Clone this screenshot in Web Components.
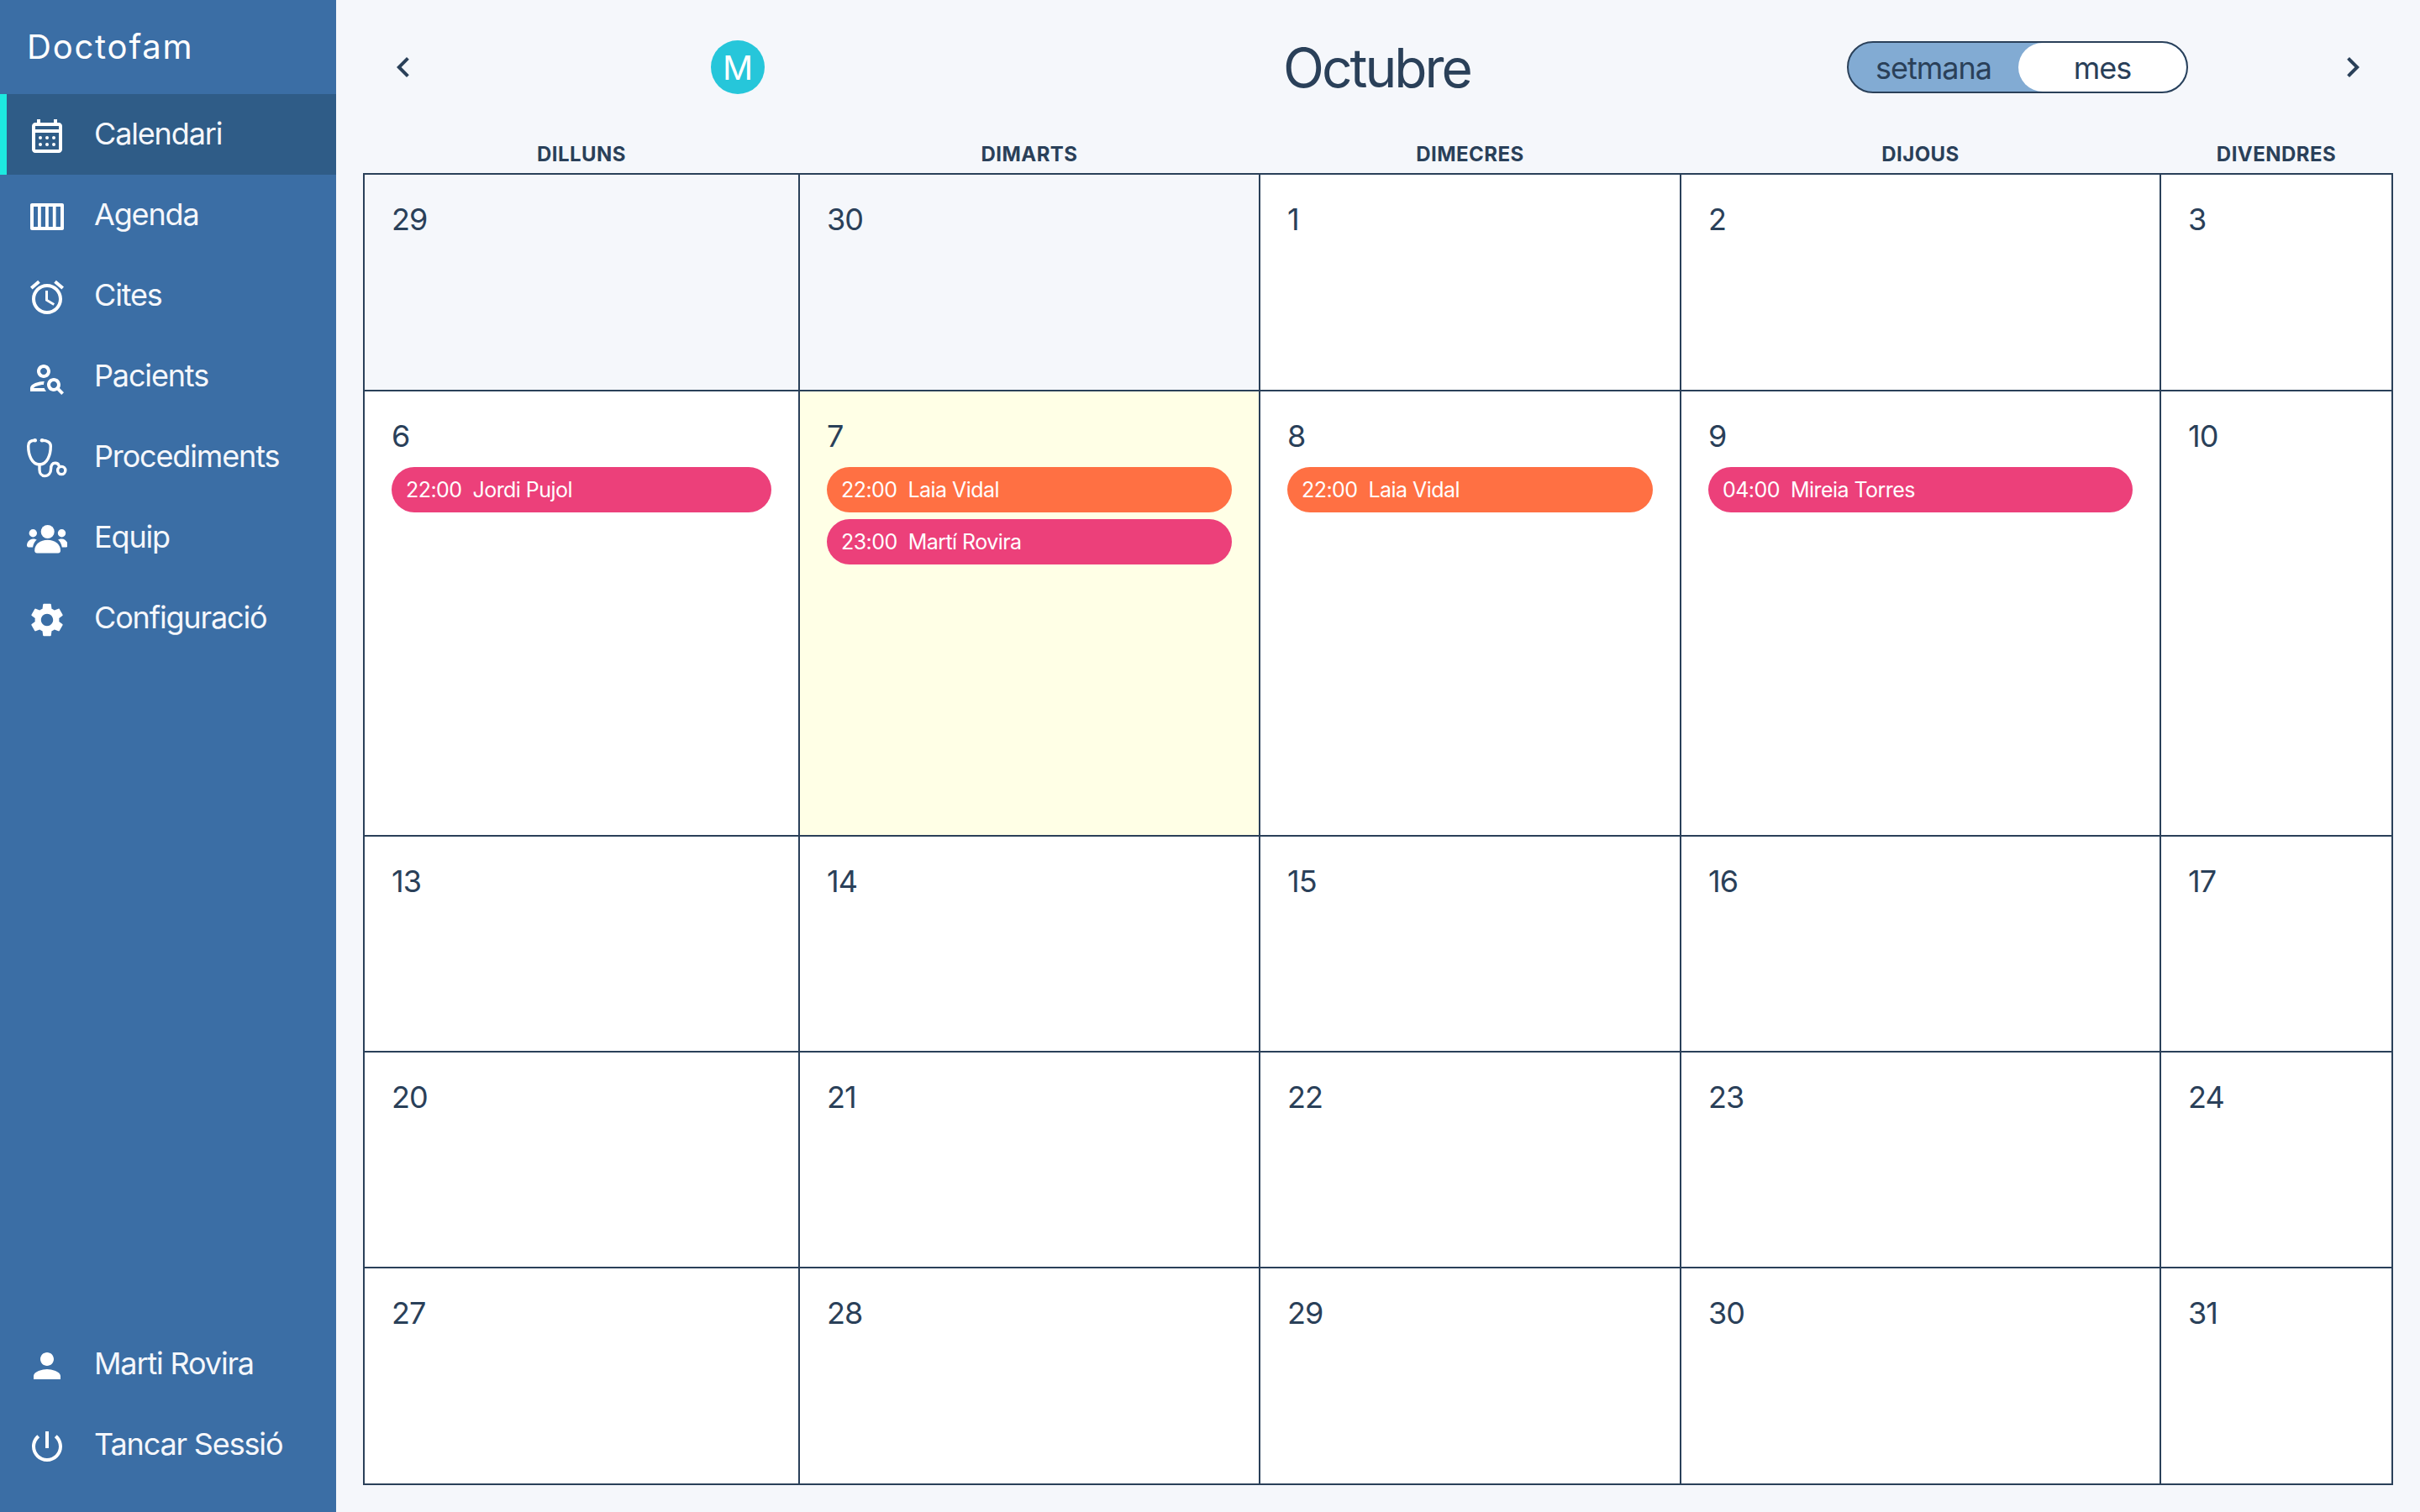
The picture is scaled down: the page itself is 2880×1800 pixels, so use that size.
<!DOCTYPE html>
<html lang="ca">
<head>
<meta charset="utf-8">
<title>Doctofam</title>
<style>
  html, body { margin: 0; height: 100%; }
  body {
    background: #f5f7fb;
    color: #2a4059;
    font-family: Inter, "Liberation Sans", sans-serif;
  }
</style>
</head>
<body>
<app-shell>
  <side-bar slot="side">
    <nav-item icon="calendar" active>Calendari</nav-item>
    <nav-item icon="agenda">Agenda</nav-item>
    <nav-item icon="alarm">Cites</nav-item>
    <nav-item icon="search">Pacients</nav-item>
    <nav-item icon="stetho">Procediments</nav-item>
    <nav-item icon="group">Equip</nav-item>
    <nav-item icon="gear">Configuració</nav-item>
    <nav-item slot="bottom" icon="person">Marti Rovira</nav-item>
    <nav-item slot="bottom" icon="power">Tancar Sessió</nav-item>
  </side-bar>

  <cal-header title="Octubre" avatar="M"></cal-header>

  <cal-weekdays>
    <span>DILLUNS</span><span>DIMARTS</span><span>DIMECRES</span><span>DIJOUS</span><span>DIVENDRES</span>
  </cal-weekdays>

  <cal-grid>
    <cal-day num="29" muted></cal-day>
    <cal-day num="30" muted></cal-day>
    <cal-day num="1"></cal-day>
    <cal-day num="2"></cal-day>
    <cal-day num="3"></cal-day>

    <cal-day num="6"><cal-event time="22:00" tone="pink">Jordi Pujol</cal-event></cal-day>
    <cal-day num="7" today>
      <cal-event time="22:00" tone="orange">Laia Vidal</cal-event>
      <cal-event time="23:00" tone="pink">Martí Rovira</cal-event>
    </cal-day>
    <cal-day num="8"><cal-event time="22:00" tone="orange">Laia Vidal</cal-event></cal-day>
    <cal-day num="9"><cal-event time="04:00" tone="pink">Mireia Torres</cal-event></cal-day>
    <cal-day num="10"></cal-day>

    <cal-day num="13"></cal-day>
    <cal-day num="14"></cal-day>
    <cal-day num="15"></cal-day>
    <cal-day num="16"></cal-day>
    <cal-day num="17"></cal-day>

    <cal-day num="20"></cal-day>
    <cal-day num="21"></cal-day>
    <cal-day num="22"></cal-day>
    <cal-day num="23"></cal-day>
    <cal-day num="24"></cal-day>

    <cal-day num="27"></cal-day>
    <cal-day num="28"></cal-day>
    <cal-day num="29"></cal-day>
    <cal-day num="30"></cal-day>
    <cal-day num="31"></cal-day>
  </cal-grid>
</app-shell>

<script>
// Icons, all in a 24x24 box drawn at 48px
const ICONS = {
  calendar: `<path d="M19 4h-1V2h-2v2H8V2H6v2H5c-1.11 0-1.99.9-1.99 2L3 20c0 1.1.89 2 2 2h14c1.1 0 2-.9 2-2V6c0-1.1-.9-2-2-2zm0 16H5V10h14v10zm0-12H5V6h14v2z"/>
    <circle cx="8" cy="13" r="1"/><circle cx="12" cy="13" r="1"/><circle cx="16" cy="13" r="1"/>
    <circle cx="8" cy="17" r="1"/><circle cx="12" cy="17" r="1"/><circle cx="16" cy="17" r="1"/>`,
  agenda: `<path fill-rule="evenodd" d="M3 4h18c.55 0 1 .45 1 1v14c0 .55-.45 1-1 1H3c-.55 0-1-.45-1-1V5c0-.55.45-1 1-1zm1 2v12h2.5V6H4zm4.4 0v12H11V6H8.4zM12.9 6v12h2.5V6h-2.5zm4.4 0v12H20V6h-2.7z"/>`,
  alarm: `<path d="M22 5.72l-4.6-3.86-1.29 1.53 4.6 3.86L22 5.72zM7.88 3.39L6.6 1.86 2 5.71l1.29 1.53 4.59-3.85zM12.5 8H11v6l4.75 2.85.75-1.23-4-2.37V8zM12 4c-4.97 0-9 4.03-9 9s4.02 9 9 9c4.97 0 9-4.03 9-9s-4.03-9-9-9zm0 16c-3.87 0-7-3.13-7-7s3.13-7 7-7 7 3.13 7 7-3.13 7-7 7z"/>`,
  search: `<path d="M10 12c2.21 0 4-1.79 4-4s-1.79-4-4-4-4 1.79-4 4 1.79 4 4 4zm0-6c1.1 0 2 .9 2 2s-.9 2-2 2-2-.9-2-2 .9-2 2-2zM4 18c.22-.72 3.31-2 6-2 0-.7.13-1.37.35-1.99C7.62 13.91 2 15.27 2 18v2h9.54c-.52-.58-.93-1.25-1.19-2H4zM19.43 18.02c.36-.59.57-1.28.57-2.02 0-2.21-1.79-4-4-4s-4 1.79-4 4 1.79 4 4 4c.74 0 1.43-.22 2.02-.57L20.59 22 22 20.59l-2.57-2.57zM16 18c-1.1 0-2-.9-2-2s.9-2 2-2 2 .9 2 2-.9 2-2 2z"/>`,
  stetho: `<g fill="none" stroke="currentColor" stroke-width="1.7" stroke-linecap="round">
      <path d="M4.85 1.15C2.5 1.15.85 2 .85 4.5c0 5.5 2.15 11 6.65 11s6.65-5.5 6.65-11c0-2.3-2.15-3.35-5.15-3.35"/>
      <path d="M7.5 15.5v3c0 2.3 1.3 3.8 3.1 3.8 2.2 0 3.7-1.8 3.7-4.3 0-2.2.9-3.4 2.5-3.4 1.2 0 2 .7 2.2 1.4"/>
      <circle cx="20.6" cy="19" r="2.3"/>
    </g>
    <circle cx="4.85" cy="1.15" r="1.15"/><circle cx="9" cy="1.15" r="1.15"/>`,
  group: `<circle cx="12.35" cy="7.5" r="4"/><circle cx="3.65" cy="8.35" r="2.35"/><circle cx="20.75" cy="8.35" r="2.35"/>
    <path d="M4.6 18.6c0-3.6 3.4-6.2 7.7-6.2s7.7 2.6 7.7 6.2v.3c0 .8-.6 1.4-1.4 1.4H6c-.8 0-1.4-.6-1.4-1.4z"/>
    <path d="M0 15.6c0-2 1.6-3.9 3.7-3.9.9 0 1.6.2 2.2.6C4.8 13.2 3.9 14.6 3.5 16.7H1c-.6 0-1-.5-1-1.1z"/>
    <path transform="translate(24.4 0) scale(-1 1)" d="M0 15.6c0-2 1.6-3.9 3.7-3.9.9 0 1.6.2 2.2.6C4.8 13.2 3.9 14.6 3.5 16.7H1c-.6 0-1-.5-1-1.1z"/>`,
  gear: `<path d="M19.14 12.94c.04-.3.06-.61.06-.94 0-.32-.02-.64-.07-.94l2.03-1.58c.18-.14.23-.41.12-.61l-1.92-3.32c-.12-.22-.37-.29-.59-.22l-2.39.96c-.5-.38-1.03-.7-1.62-.94l-.36-2.54c-.04-.24-.24-.41-.48-.41h-3.84c-.24 0-.43.17-.47.41l-.36 2.54c-.59.24-1.13.57-1.62.94l-2.39-.96c-.22-.08-.47 0-.59.22L2.74 8.87c-.12.21-.08.47.12.61l2.03 1.58c-.05.3-.09.63-.09.94s.02.64.07.94l-2.03 1.58c-.18.14-.23.41-.12.61l1.92 3.32c.12.22.37.29.59.22l2.39-.96c.5.38 1.03.7 1.62.94l.36 2.54c.05.24.24.41.48.41h3.84c.24 0 .44-.17.47-.41l.36-2.54c.59-.24 1.13-.56 1.62-.94l2.39.96c.22.08.47 0 .59-.22l1.92-3.32c.12-.22.07-.47-.12-.61l-2.01-1.58zM12 15.6c-1.98 0-3.6-1.62-3.6-3.6s1.62-3.6 3.6-3.6 3.6 1.62 3.6 3.6-1.62 3.6-3.6 3.6z"/>`,
  person: `<path d="M12 12c2.21 0 4-1.79 4-4s-1.79-4-4-4-4 1.79-4 4 1.79 4 4 4zm0 2c-2.67 0-8 1.34-8 4v2h16v-2c0-2.66-5.33-4-8-4z"/>`,
  power: `<path d="M13 3h-2v10h2V3zm4.83 2.17l-1.42 1.42C17.99 7.86 19 9.81 19 12c0 3.87-3.13 7-7 7s-7-3.13-7-7c0-2.19 1.01-4.14 2.58-5.42L6.17 5.17C4.23 6.82 3 9.26 3 12c0 4.97 4.03 9 9 9s9-4.03 9-9c0-2.74-1.23-5.18-3.17-6.83z"/>`,
  left: `<path d="M15.41 7.41L14 6l-6 6 6 6 1.41-1.41L10.83 12z"/>`,
  right: `<path d="M10 6L8.59 7.41 13.17 12l-4.58 4.59L10 18l6-6z"/>`
}

const svgIcon = (name) =>
  `<svg viewBox="0 0 24 24" width="48" height="48" fill="currentColor" aria-hidden="true">${ICONS[name]}</svg>`

class AppShell extends HTMLElement {
  constructor() {
    super()
    this.attachShadow({ mode: 'open' })
    this.shadowRoot.innerHTML = `
    <style>
      :host { display: flex; height: 1800px; }
      main { flex: 1; min-width: 0; padding: 0 32px; display: flex; flex-direction: column; }
    </style>
    <slot name="side"></slot>
    <main><slot></slot></main>
    `
  }
}

class SideBar extends HTMLElement {
  constructor() {
    super()
    this.attachShadow({ mode: 'open' })
    this.shadowRoot.innerHTML = `
    <style>
      :host {
        display: flex;
        flex-direction: column;
        flex: none;
        width: 400px;
        background: #3b6ea5;
        color: #f5f7fb;
      }
      .logo {
        height: 112px;
        box-sizing: border-box;
        padding: 30px 0 0 32px;
        font-size: 40px;
        line-height: 52px;
        letter-spacing: 1.8px;
        color: #fff;
      }
      .bottom { margin-top: auto; padding-bottom: 32px; }
    </style>
    <div class="logo">Doctofam</div>
    <slot></slot>
    <div class="bottom"><slot name="bottom"></slot></div>
    `
  }
}

class NavItem extends HTMLElement {
  constructor() {
    super()
    this.attachShadow({ mode: 'open' })
  }

  connectedCallback() {
    this.shadowRoot.innerHTML = `
    <style>
      :host {
        display: flex;
        align-items: center;
        height: 96px;
        padding-left: 32px;
        font-size: 36px;
        letter-spacing: -1.15px;
      }
      :host([active]) {
        background: #2f5c87;
        box-shadow: inset 8px 0 0 #1de9e0;
      }
      svg { flex: none; color: #fff; transform: translateY(2px); }
      span { margin: 0 0 2px 32px; white-space: nowrap; }
    </style>
    ${svgIcon(this.getAttribute('icon'))}
    <span><slot></slot></span>
    `
  }
}

class CalHeader extends HTMLElement {
  constructor() {
    super()
    this.attachShadow({ mode: 'open' })
  }

  connectedCallback() {
    this.shadowRoot.innerHTML = `
    <style>
      :host { display: flex; align-items: center; height: 160px; flex: none; }
      .prev { margin-left: 24px; display: flex; }
      .avatar {
        margin-left: 342px;
        width: 64px; height: 64px;
        border-radius: 50%;
        background: #26c6da;
        color: #fff;
        font-size: 40px;
        display: flex; align-items: center; justify-content: center;
      }
      h1 {
        margin: 2px 0 0 617px;
        width: 228px;
        font-size: 64px;
        font-weight: 400;
        letter-spacing: -3px;
        line-height: 80px;
        white-space: nowrap;
      }
      .next { margin-left: auto; margin-right: 24px; display: flex; }
    </style>
    <span class="prev">${svgIcon('left')}</span>
    <span class="avatar">${this.getAttribute('avatar')}</span>
    <h1>${this.getAttribute('title')}</h1>
    <view-toggle></view-toggle>
    <span class="next">${svgIcon('right')}</span>
    `
  }
}

class ViewToggle extends HTMLElement {
  constructor() {
    super()
    this.attachShadow({ mode: 'open' })
    this.shadowRoot.innerHTML = `
    <style>
      :host {
        display: flex;
        box-sizing: border-box;
        width: 406px;
        height: 62px;
        margin-left: 443px;
        border: 2px solid #2a4059;
        border-radius: 31px;
        background: #82abd3;
        font-size: 36px;
        letter-spacing: -1px;
        overflow: hidden;
      }
      span { display: flex; align-items: center; justify-content: center; padding-top: 2px; }
      .week { flex: 1; }
      .month { width: 200px; background: #fff; border-radius: 30px; }
    </style>
    <span class="week">setmana</span>
    <span class="month">mes</span>
    `
  }
}

const COLUMNS = '518px 548px 501px 571px 276px'

class CalWeekdays extends HTMLElement {
  constructor() {
    super()
    this.attachShadow({ mode: 'open' })
    this.shadowRoot.innerHTML = `
    <style>
      :host {
        display: grid;
        grid-template-columns: ${COLUMNS};
        flex: none;
        height: 46px;
      }
      ::slotted(span) {
        padding-left: 2px;
        text-align: center;
        font-size: 24px;
        font-weight: 700;
        letter-spacing: 0.45px;
        line-height: 47px;
      }
    </style>
    <slot></slot>
    `
  }
}

class CalGrid extends HTMLElement {
  constructor() {
    super()
    this.attachShadow({ mode: 'open' })
    this.shadowRoot.innerHTML = `
    <style>
      :host {
        display: grid;
        grid-template-columns: ${COLUMNS};
        grid-template-rows: 258px 530px 257px 257px 258px;
      }
    </style>
    <slot></slot>
    `
  }
}

class CalDay extends HTMLElement {
  constructor() {
    super()
    this.attachShadow({ mode: 'open' })
  }

  connectedCallback() {
    this.shadowRoot.innerHTML = `
    <style>
      :host {
        display: block;
        box-sizing: border-box;
        padding: 26px 32px 0 32px;
        background: #fff;
        border: 2px solid #2a4059;
        margin: 0 -2px -2px 0;
      }
      :host([muted]) { background: #f5f7fb; }
      :host([today]) { background: #ffffe6; }
      .num { font-size: 36px; line-height: 54px; margin-bottom: 10px; letter-spacing: -0.9px; }
      ::slotted(cal-event) { margin-bottom: 8px; }
    </style>
    <div class="num">${this.getAttribute('num')}</div>
    <slot></slot>
    `
  }
}

class CalEvent extends HTMLElement {
  constructor() {
    super()
    this.attachShadow({ mode: 'open' })
  }

  connectedCallback() {
    const tone = this.getAttribute('tone') === 'orange' ? '#ff7043' : '#ec407a'
    this.shadowRoot.innerHTML = `
    <style>
      :host {
        display: flex;
        align-items: center;
        height: 54px;
        padding-left: 17px;
        border-radius: 27px;
        background: ${tone};
        color: #fff;
        font-size: 25px;
        letter-spacing: -0.55px;
        white-space: nowrap;
      }
      b { font-weight: 400; margin-right: 13px; }
    </style>
    <b>${this.getAttribute('time')}</b><slot></slot>
    `
  }
}

customElements.define('app-shell', AppShell)
customElements.define('side-bar', SideBar)
customElements.define('nav-item', NavItem)
customElements.define('cal-header', CalHeader)
customElements.define('view-toggle', ViewToggle)
customElements.define('cal-weekdays', CalWeekdays)
customElements.define('cal-grid', CalGrid)
customElements.define('cal-day', CalDay)
customElements.define('cal-event', CalEvent)
</script>
</body>
</html>
